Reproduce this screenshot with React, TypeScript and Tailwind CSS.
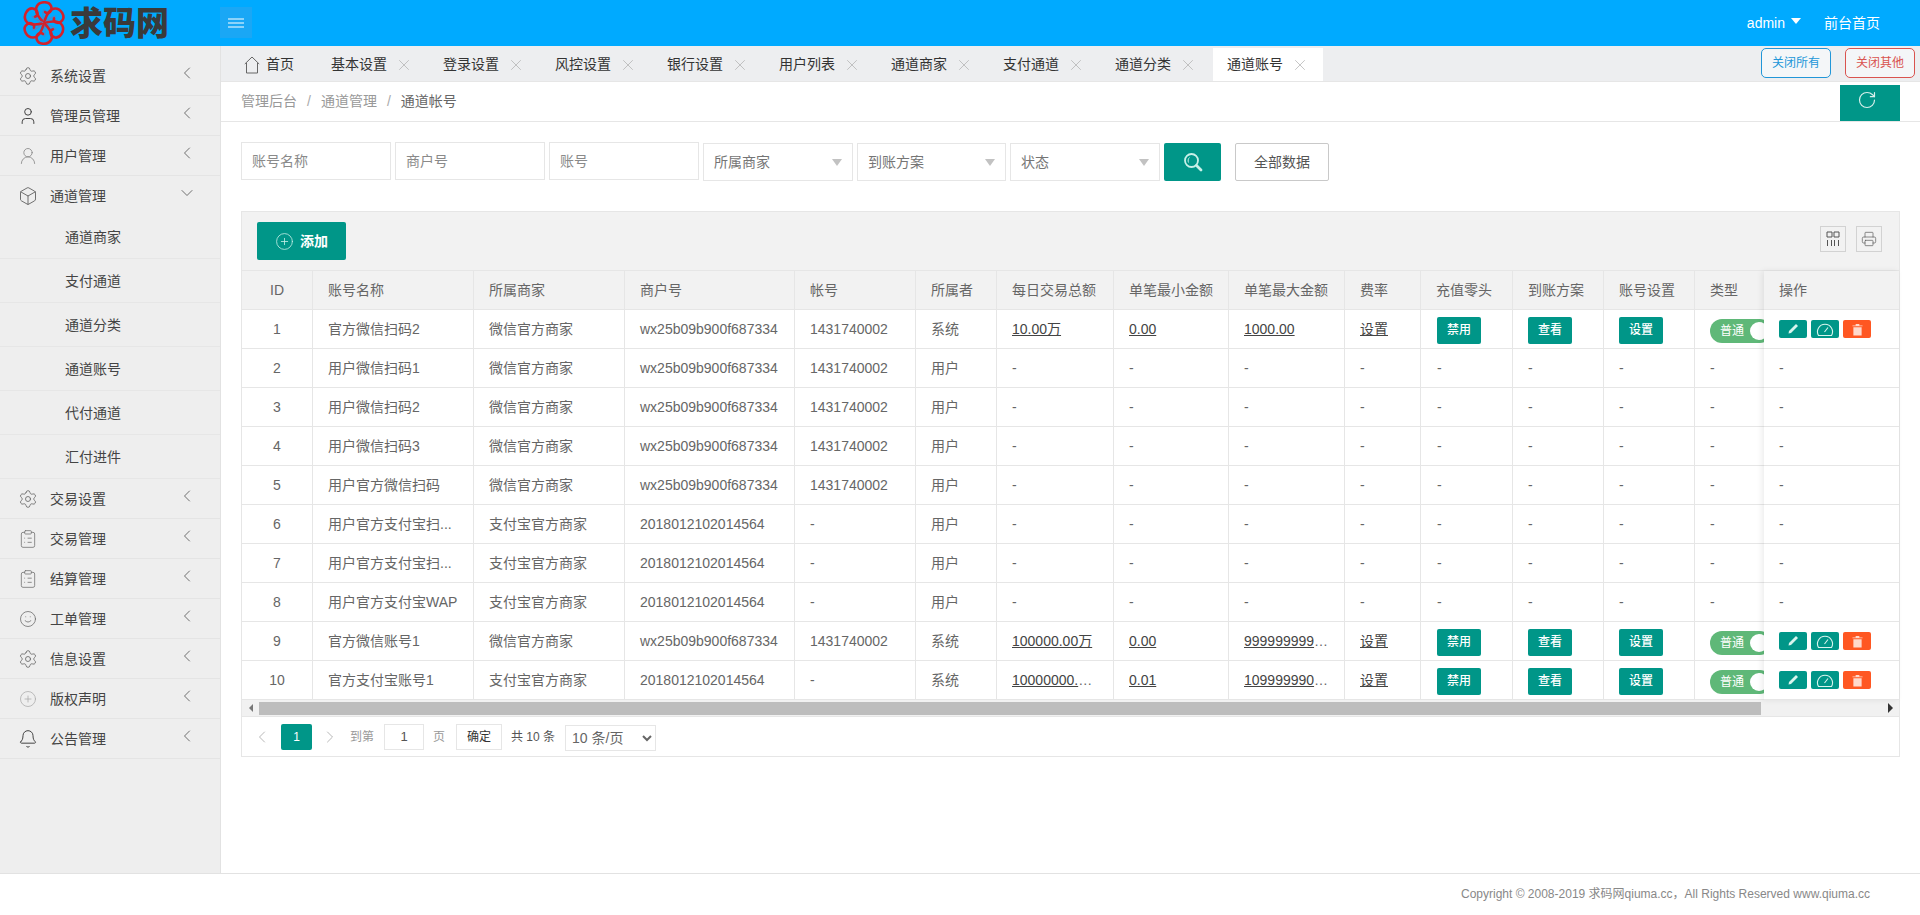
import React from "react";
import { Settings, User, UserRound, Box, ClipboardList, Smile, CirclePlus, Bell, ChevronLeft, ChevronRight, ChevronDown, X, RotateCw, Printer } from "lucide-react";

const Flower = () => (
  <svg viewBox="0 0 44 44" className="w-[44px] h-[44px] shrink-0" fill="none">
    {[0, 60, 120, 180, 240, 300].map((a) => (
      <g key={a} transform={`rotate(${a} 22 22)`}>
        <path d="M22 22C17 17 12 10 15 5C18 0 27 0 29 5C31 10 26 14 23 11" stroke="#d2222c" strokeWidth="2.6" strokeLinecap="round" />
        <path d="M22 21C21 16 20 11 22 8" stroke="#5b7fc0" strokeWidth="1" />
      </g>
    ))}
  </svg>
);

const HomeIcon = () => (
  <svg viewBox="0 0 16 18" className="w-[16px] h-[18px]" fill="none" stroke="#666" strokeWidth="1">
    <path d="M0.8 8 8 1 15.2 8M2.5 7V17H13.5V7" />
  </svg>
);

const ColsIcon = () => (
  <svg viewBox="0 0 14 16" className="w-[14px] h-[16px]" fill="none" stroke="#555" strokeWidth="1">
    <path d="M1 1H6V6H1ZM8 1H13V6H8ZM1.5 9V15M5.5 9V15M8.5 9V15M12.5 9V15" />
  </svg>
);

const SearchIcon = () => (
  <svg viewBox="0 0 20 20" className="w-[20px] h-[20px]" fill="none" stroke="#c8f0e8">
    <circle cx="8.5" cy="8.5" r="6.5" strokeWidth="1.8" />
    <path d="M13.5 13.5 18 18" strokeWidth="2.8" strokeLinecap="round" />
    <path d="M5.5 10.5C4.8 8.8 5 6.8 6.5 5.5" strokeWidth="1" />
  </svg>
);

const SideItem = ({ icon, label, open }: { icon: React.ReactNode; label: string; open?: boolean }) => (
  <div className={`flex items-center pl-[18px] pr-[23px] text-[14px] text-[#444] ${open ? "h-[39px]" : "h-[40px] border-b border-[#e4e4e4]"}`}>
    <span className="w-[20px] h-[20px] flex items-center justify-center">{icon}</span>
    <span className="ml-[12px] mt-[2px] flex-1">{label}</span>
    {open ? (
      <ChevronDown size={20} strokeWidth={1} color="#555" className="-mt-[6px]" />
    ) : (
      <ChevronLeft size={20} strokeWidth={1} color="#555" className="-mt-[6px]" />
    )}
  </div>
);

const gear = <Settings size={20} strokeWidth={1} color="#666" />;
const clip = <ClipboardList size={20} strokeWidth={1} color="#777" />;

const topItems = [
  { icon: gear, label: "系统设置" },
  { icon: <User size={20} strokeWidth={1.2} color="#444" />, label: "管理员管理" },
  { icon: <UserRound size={20} strokeWidth={1} color="#888" />, label: "用户管理" },
];
const bottomItems = [
  { icon: gear, label: "交易设置" },
  { icon: clip, label: "交易管理" },
  { icon: clip, label: "结算管理" },
  { icon: <Smile size={18} strokeWidth={1} color="#666" />, label: "工单管理" },
  { icon: gear, label: "信息设置" },
  { icon: <CirclePlus size={18} strokeWidth={1} color="#aaa" />, label: "版权声明" },
  { icon: <Bell size={20} strokeWidth={1.2} color="#444" />, label: "公告管理" },
];
const subItems = ["通道商家", "支付通道", "通道分类", "通道账号", "代付通道", "汇付进件"];
const tabs = ["基本设置", "登录设置", "风控设置", "银行设置", "用户列表", "通道商家", "支付通道", "通道分类"];

const Sel = ({ label, w }: { label: string; w: string }) => (
  <div className={`${w} h-[38px] mt-[1px] border border-[#e6e6e6] bg-white flex items-center justify-between pl-[10px] pr-[10px] text-[14px] text-[#757575]`}>
    <span>{label}</span>
    <span className="w-0 h-0 border-x-[5.5px] border-x-transparent border-t-[7px] border-t-[#c2c2c2]" />
  </div>
);

const colClasses = ["w-[71px]", "w-[161px]", "w-[151px]", "w-[170px]", "w-[121px]", "w-[81px]", "w-[117px]", "w-[115px]", "w-[116px]", "w-[76px]", "w-[92px]", "w-[91px]", "w-[91px]", "w-[91px]"];
const headers = ["ID", "账号名称", "所属商家", "商户号", "帐号", "所属者", "每日交易总额", "单笔最小金额", "单笔最大金额", "费率", "充值零头", "到账方案", "账号设置", "类型"];

const wx = "wx25b09b900f687334";
const ali = "2018012102014564";
const acc = "1431740002";
type Row = { id: number; name: string; shop: string; mch: string; acct: string; owner: string; day?: string; min?: string; max?: string };
const rows: Row[] = [
  { id: 1, name: "官方微信扫码2", shop: "微信官方商家", mch: wx, acct: acc, owner: "系统", day: "10.00万", min: "0.00", max: "1000.00" },
  { id: 2, name: "用户微信扫码1", shop: "微信官方商家", mch: wx, acct: acc, owner: "用户" },
  { id: 3, name: "用户微信扫码2", shop: "微信官方商家", mch: wx, acct: acc, owner: "用户" },
  { id: 4, name: "用户微信扫码3", shop: "微信官方商家", mch: wx, acct: acc, owner: "用户" },
  { id: 5, name: "用户官方微信扫码", shop: "微信官方商家", mch: wx, acct: acc, owner: "用户" },
  { id: 6, name: "用户官方支付宝扫...", shop: "支付宝官方商家", mch: ali, acct: "-", owner: "用户" },
  { id: 7, name: "用户官方支付宝扫...", shop: "支付宝官方商家", mch: ali, acct: "-", owner: "用户" },
  { id: 8, name: "用户官方支付宝WAP", shop: "支付宝官方商家", mch: ali, acct: "-", owner: "用户" },
  { id: 9, name: "官方微信账号1", shop: "微信官方商家", mch: wx, acct: acc, owner: "系统", day: "100000.00万", min: "0.00", max: "9999999999.00" },
  { id: 10, name: "官方支付宝账号1", shop: "支付宝官方商家", mch: ali, acct: "-", owner: "系统", day: "10000000.00万", min: "0.01", max: "1099999900.00" },
];

const cell = "h-[39px] px-[15px] border-r border-b border-[#e6e6e6] text-[14px] text-[#666] truncate";
const Teal = ({ t }: { t: string }) => (
  <span className="inline-flex items-center justify-center w-[44px] h-[27px] mt-[2px] align-middle rounded-[2px] bg-[#009688] text-white text-[12px] font-medium">{t}</span>
);
const Money = ({ v }: { v?: string }) => (v ? <span className="underline text-[#444]">{v}</span> : <>-</>);

const ActionBtn = ({ c, children }: { c: string; children: React.ReactNode }) => (
  <span className={`w-[28px] h-[18px] rounded-[2px] flex items-center justify-center ${c}`}>{children}</span>
);

export default function App() {
  return (
    <div className="h-screen w-full overflow-hidden flex flex-col bg-white [font-family:Liberation_Sans,Noto_Sans_CJK_SC,sans-serif]">
      <header className="h-[46px] shrink-0 bg-[#00aaff] flex items-center text-white text-[14px]">
        <div className="w-[220px] shrink-0 flex items-center pl-[22px]">
          <Flower />
          <span className="ml-[4px] text-[33px] leading-none font-black text-[#3a3a3a]">求码网</span>
        </div>
        <div className="w-[32px] h-[31px] -mt-[1px] bg-[#1aa7f5] flex items-center justify-center">
          <svg viewBox="0 0 16 10" className="w-[16px] h-[10px]" stroke="#fff" strokeWidth="1"><path d="M0 1H16M0 5H16M0 9H16" /></svg>
        </div>
        <div className="ml-auto flex items-center pr-[40px]">
          <span>admin</span>
          <span className="ml-[6px] -mt-[4px] w-0 h-0 border-x-[5.5px] border-x-transparent border-t-[6px] border-t-white" />
          <span className="ml-[23px]">前台首页</span>
        </div>
      </header>

      <div className="flex-1 flex min-h-0">
        <aside className="w-[221px] shrink-0 bg-[#eeeeee] border-r border-[#e2e2e2] pt-[10px]">
          {topItems.map((i) => <SideItem key={i.label} {...i} />)}
          <SideItem icon={<Box size={20} strokeWidth={1} color="#555" />} label="通道管理" open />
          {subItems.map((s) => (
            <div key={s} className="h-[44px] pl-[65px] flex items-center border-b border-[#e6e6e6] text-[14px] text-[#444]"><span className="mt-[2px]">{s}</span></div>
          ))}
          {bottomItems.map((i) => <SideItem key={i.label} {...i} />)}
        </aside>

        <main className="flex-1 min-w-0 flex flex-col">
          <div className="h-[36px] shrink-0 bg-[#edeef0] border-b border-[#e6e6e6] flex items-start text-[14px] text-[#333]">
            <div className="w-[96px] h-[33px] mt-[2px] pl-[23px] flex items-center">
              <HomeIcon />
              <span className="ml-[6px]">首页</span>
            </div>
            {tabs.map((t) => (
              <div key={t} className="w-[112px] h-[33px] mt-[2px] pl-[14px] flex items-center">
                <span>{t}</span>
                <X size={18} strokeWidth={0.9} color="#aaa" className="ml-[8px]" />
              </div>
            ))}
            <div className="w-[110px] h-[33px] mt-[2px] pl-[14px] flex items-center bg-white">
              <span>通道账号</span>
              <X size={18} strokeWidth={0.9} color="#aaa" className="ml-[8px]" />
            </div>
            <div className="ml-auto mt-[2px] pr-[5px] flex gap-[14px] text-[12px]">
              <button className="w-[70px] h-[30px] rounded-[5px] border border-[#2196d8] text-[#2196d8] bg-[#f4f6f8]">关闭所有</button>
              <button className="w-[70px] h-[30px] rounded-[5px] border border-[#d9534f] text-[#d9534f] bg-[#f4f6f8]">关闭其他</button>
            </div>
          </div>

          <div className="h-[40px] shrink-0 border-b border-[#e6e6e6] flex items-end justify-between pl-[20px] pr-[20px]">
            <div className="h-[39px] flex items-center text-[14px] text-[#999]">
              <span>管理后台</span>
              <span className="mx-[10px] text-[#aaa]">/</span>
              <span>通道管理</span>
              <span className="mx-[10px] text-[#aaa]">/</span>
              <span className="text-[#666]">通道帐号</span>
            </div>
            <div className="w-[60px] h-[36px] bg-[#009688] flex pl-[17px] pt-[5px]">
              <RotateCw size={20} strokeWidth={1.4} color="#d8f0ec" />
            </div>
          </div>

          <div className="flex-1 min-h-0 px-[20px] pt-[20px]">
            <div className="flex items-start text-[14px]">
              <div className="flex gap-[4px]">
                <input className="w-[150px] h-[38px] border border-[#e6e6e6] pl-[10px] outline-none placeholder:text-[#8a8a8a]" placeholder="账号名称" />
                <input className="w-[150px] h-[38px] border border-[#e6e6e6] pl-[10px] outline-none placeholder:text-[#8a8a8a]" placeholder="商户号" />
                <input className="w-[150px] h-[38px] border border-[#e6e6e6] pl-[10px] outline-none placeholder:text-[#8a8a8a]" placeholder="账号" />
                <Sel label="所属商家" w="w-[150px]" />
                <Sel label="到账方案" w="w-[149px]" />
                <Sel label="状态" w="w-[150px]" />
              </div>
              <div className="ml-[4px] mt-[1px] w-[57px] h-[38px] rounded-[2px] bg-[#009688] flex items-center justify-center">
                <SearchIcon />
              </div>
              <button className="ml-[14px] mt-[1px] w-[94px] h-[38px] rounded-[2px] border border-[#c9c9c9] bg-white text-[#555] text-[14px]">全部数据</button>
            </div>

            <div className="mt-[30px] border border-[#e6e6e6]">
              <div className="h-[59px] bg-[#f2f2f2] border-b border-[#e6e6e6] flex items-center justify-between pl-[15px] pr-[17px]">
                <button className="w-[89px] h-[38px] rounded-[2px] bg-[#009688] text-white text-[14px] font-bold flex items-center pl-[18px]">
                  <CirclePlus size={19} strokeWidth={1} color="#c8f0e8" />
                  <span className="ml-[6px]">添加</span>
                </button>
                <div className="flex gap-[10px] -mt-[4px]">
                  <span className="w-[26px] h-[26px] border border-[#d2d2d2] flex items-center justify-center"><ColsIcon /></span>
                  <span className="w-[26px] h-[26px] border border-[#d2d2d2] flex items-center justify-center"><Printer size={16} strokeWidth={1} color="#555" /></span>
                </div>
              </div>

              <div className="flex">
                <div className="flex-1 min-w-0 overflow-hidden">
                  <table className="table-fixed border-separate border-spacing-0 w-[1544px]">
                    <colgroup>{colClasses.map((c, i) => <col key={i} className={c} />)}</colgroup>
                    <thead>
                      <tr className="bg-[#f2f2f2]">
                        {headers.map((h, i) => (
                          <th key={h} className={`${cell} font-normal ${i === 0 ? "text-center" : "text-left"}`}>{h}</th>
                        ))}
                      </tr>
                    </thead>
                    <tbody>
                      {rows.map((r) => (
                        <tr key={r.id}>
                          <td className={`${cell} text-center`}>{r.id}</td>
                          <td className={cell}>{r.name}</td>
                          <td className={cell}>{r.shop}</td>
                          <td className={cell}>{r.mch}</td>
                          <td className={cell}>{r.acct}</td>
                          <td className={cell}>{r.owner}</td>
                          <td className={cell}><Money v={r.day} /></td>
                          <td className={cell}><Money v={r.min} /></td>
                          <td className={cell}><Money v={r.max} /></td>
                          <td className={cell}>{r.day ? <span className="underline text-[#444]">设置</span> : "-"}</td>
                          <td className={`${cell} pl-[16px]`}>{r.day ? <Teal t="禁用" /> : "-"}</td>
                          <td className={cell}>{r.day ? <Teal t="查看" /> : "-"}</td>
                          <td className={cell}>{r.day ? <Teal t="设置" /> : "-"}</td>
                          <td className={cell}>
                            {r.day ? (
                              <span className="inline-flex items-center w-[62px] h-[24px] mt-[3px] align-middle rounded-full bg-[#5fb878] pl-[10px] text-white text-[12px]">
                                <span>普通</span>
                                <span className="ml-[6px] w-[18px] h-[18px] rounded-full bg-white shrink-0" />
                              </span>
                            ) : "-"}
                          </td>
                        </tr>
                      ))}
                    </tbody>
                  </table>
                </div>
                <div className="w-[135px] shrink-0 shadow-[-2px_0_6px_rgba(0,0,0,0.08)] z-10 bg-white">
                  <div className="h-[39px] px-[15px] bg-[#f2f2f2] border-b border-[#e6e6e6] flex items-center text-[14px] text-[#666]">操作</div>
                  {rows.map((r) => (
                    <div key={r.id} className="h-[39px] px-[15px] border-b border-[#e6e6e6] flex items-center gap-[4px] text-[14px] text-[#666]">
                      {r.day ? (
                        <>
                          <ActionBtn c="bg-[#009688]">
                            <svg viewBox="0 0 12 12" className="w-[12px] h-[12px]" fill="#d8f5ee"><path d="M9 1 11 3 4 10 1.5 10.5 2 8Z" /></svg>
                          </ActionBtn>
                          <ActionBtn c="bg-[#009688]">
                            <svg viewBox="0 0 18 16" className="w-[18px] h-[16px]" fill="none" stroke="#d8f5ee" strokeWidth="1.1"><path d="M2.5 14.5A7.5 7.5 0 1 1 15.5 14.5ZM8.5 11 12 6.5" /></svg>
                          </ActionBtn>
                          <ActionBtn c="bg-[#ff5722]">
                            <svg viewBox="0 0 12 14" className="w-[11px] h-[13px]" fill="#ffd9cc"><path d="M0.5 2.5H11.5V3.5H0.5ZM4 1H8V2.5H4ZM1.5 4.5H10.5V13.5H1.5Z" /></svg>
                          </ActionBtn>
                        </>
                      ) : "-"}
                    </div>
                  ))}
                </div>
              </div>

              <div className="h-[17px] bg-[#f1f1f1] border-b border-[#e6e6e6] flex items-center">
                <div className="w-[17px] flex justify-center">
                  <span className="w-0 h-0 border-y-[4px] border-y-transparent border-r-[4px] border-r-[#777]" />
                </div>
                <div className="flex-1 h-[13px] bg-[#bdbdbd]" />
                <div className="w-[138px] flex justify-end pr-[6px]">
                  <span className="w-0 h-0 border-y-[5px] border-y-transparent border-l-[5px] border-l-[#333]" />
                </div>
              </div>

              <div className="h-[39px] flex items-center text-[12px] text-[#999]">
                <ChevronLeft size={20} strokeWidth={1} color="#aaa" className="ml-[10px]" />
                <span className="ml-[9px] w-[31px] h-[26px] rounded-[2px] bg-[#009688] text-white flex items-center justify-center font-medium">1</span>
                <ChevronRight size={20} strokeWidth={1} color="#aaa" className="ml-[8px]" />
                <span className="ml-[10px]">到第</span>
                <input defaultValue="1" className="ml-[10px] w-[40px] h-[26px] border border-[#e6e6e6] text-center text-[#555] text-[13px] outline-none" />
                <span className="ml-[9px]">页</span>
                <button className="ml-[11px] w-[46px] h-[26px] border border-[#e6e6e6] text-[#333] text-[12px] bg-white">确定</button>
                <span className="ml-[9px] text-[#555]">共 10 条</span>
                <select defaultValue="10" className="ml-[10px] w-[91px] h-[26px] mt-[2px] border border-[#e6e6e6] bg-white text-[14px] text-[#666] pl-[2px]">
                  <option value="10">10 条/页</option>
                  <option value="20">20 条/页</option>
                </select>
              </div>
            </div>
          </div>
        </main>
      </div>

      <footer className="h-[42px] shrink-0 border-t border-[#e2e2e2] flex items-center justify-end pr-[50px] pb-[2px] text-[12px] text-[#888]">
        Copyright © 2008-2019 求码网qiuma.cc，All Rights Reserved www.qiuma.cc
      </footer>
    </div>
  );
}
